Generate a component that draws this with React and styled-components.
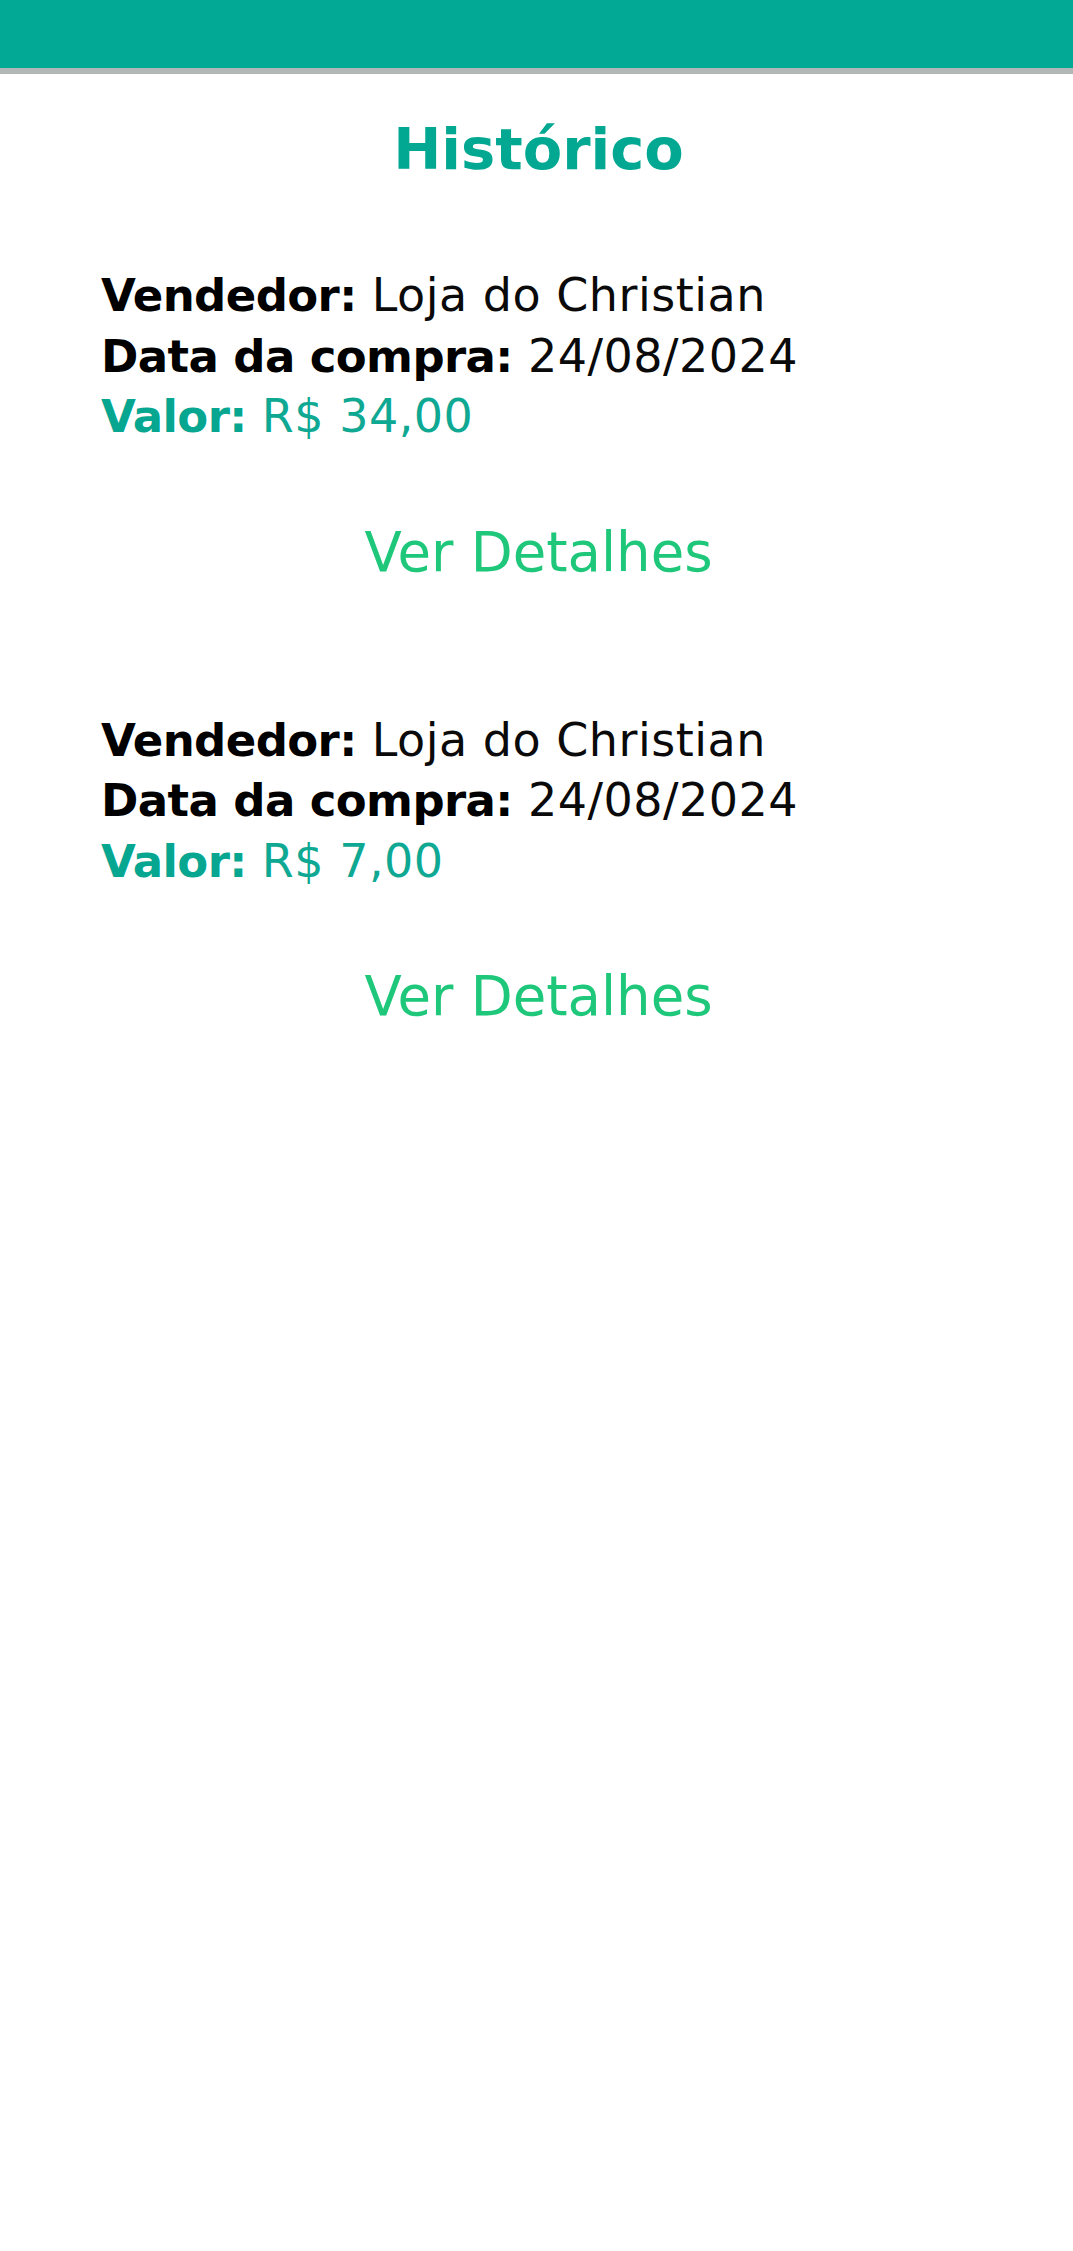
import React from "react";
import styled, { createGlobalStyle } from "styled-components";

const GlobalStyle = createGlobalStyle`
  html, body {
    margin: 0;
    padding: 0;
    background: #ffffff;
  }
  body {
    font-family: "DejaVu Sans", "Open Sans", sans-serif;
  }
`;

const Page = styled.div`
  min-height: 2251px;
  background: #ffffff;
  display: flex;
  flex-direction: column;
`;

const TopBar = styled.header`
  height: 68px;
  background: #02a994;
  border-bottom: 6px solid #b1b6b6;
`;

const Title = styled.h1`
  margin: 41px 0 0;
  font-size: 57.5px;
  line-height: 70px;
  font-weight: 700;
  color: #03a893;
  text-align: center;
  padding-left: 4px;
`;

const List = styled.div`
  display: flex;
  flex-direction: column;
  gap: 126px;
  padding-top: 80px;
`;

const Card = styled.section`
  display: flex;
  flex-direction: column;
`;

const Info = styled.div`
  padding-left: 101px;
  display: flex;
  flex-direction: column;
`;

const Line = styled.p`
  margin: 0;
  height: 60.5px;
  font-size: 46px;
  letter-spacing: 0.5px;
  line-height: 60.5px;
  color: ${(p) => (p.$accent ? "#0ea893" : "#0a0a0a")};
  white-space: nowrap;
`;

const Label = styled.strong`
  font-size: 45px;
  line-height: 1;
  letter-spacing: -0.6px;
  font-weight: 700;
  color: ${(p) => (p.$accent ? "#06a690" : "#000000")};
`;

const DetailsButton = styled.button`
  margin: 73px auto 0;
  padding: 0 0 0 4px;
  border: none;
  background: transparent;
  font-family: inherit;
  font-size: 54.5px;
  line-height: 64px;
  font-weight: 400;
  color: #1ec77a;
  cursor: pointer;
`;

const purchases = [
  { seller: "Loja do Christian", date: "24/08/2024", value: "R$ 34,00" },
  { seller: "Loja do Christian", date: "24/08/2024", value: "R$ 7,00" },
];

export default function App() {
  return (
    <>
      <GlobalStyle />
      <Page>
        <TopBar />
        <Title>Histórico</Title>
        <List>
          {purchases.map((p, i) => (
            <Card key={i}>
              <Info>
                <Line>
                  <Label>Vendedor:</Label> {p.seller}
                </Line>
                <Line>
                  <Label>Data da compra:</Label> {p.date}
                </Line>
                <Line $accent>
                  <Label $accent>Valor:</Label> {p.value}
                </Line>
              </Info>
              <DetailsButton type="button">Ver Detalhes</DetailsButton>
            </Card>
          ))}
        </List>
      </Page>
    </>
  );
}
